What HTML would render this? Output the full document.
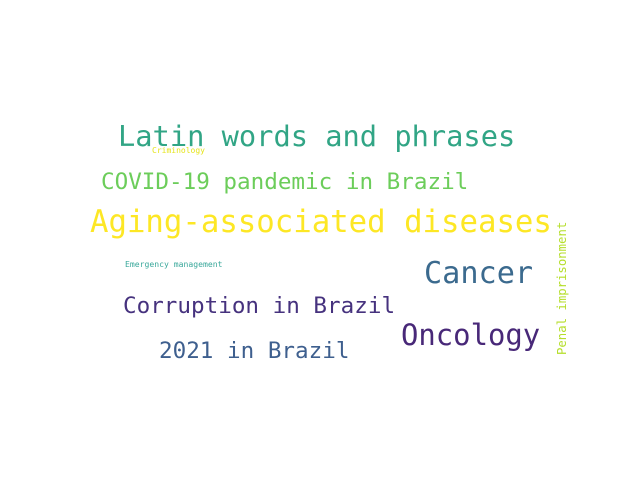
<!DOCTYPE html>
<html><head><style>
body{margin:0;width:640px;height:480px;background:#fff;position:relative;overflow:hidden}
.w{position:absolute;font-family:"DejaVu Sans Mono","Liberation Mono",monospace;line-height:1;white-space:nowrap}
</style></head><body>
<div class="w" style="left:118px;top:122px;font-size:28.7px;color:#31a585">Latin words and phrases</div>
<div class="w" style="left:152px;top:147px;font-size:8px;color:#e5e419">Criminology</div>
<div class="w" style="left:101px;top:171px;font-size:22.6px;color:#6ccd5a">COVID-19 pandemic in Brazil</div>
<div class="w" style="left:90px;top:208px;font-size:30.7px;color:#fde725">Aging-associated diseases</div>
<div class="w" style="left:125px;top:260px;font-size:8.1px;color:#3aa89b">Emergency management</div>
<div class="w" style="left:424px;top:259px;font-size:30.2px;color:#3b6a8e">Cancer</div>
<div class="w" style="left:123px;top:295px;font-size:22.6px;color:#46327e">Corruption in Brazil</div>
<div class="w" style="left:401px;top:321px;font-size:28.9px;color:#482878">Oncology</div>
<div class="w" style="left:159px;top:340px;font-size:22.6px;color:#3e5f8e">2021 in Brazil</div>
<div class="w" style="left:556px;top:355px;font-size:12.3px;color:#b5de2b;transform-origin:0 0;transform:rotate(-90deg)">Penal imprisonment</div>
</body></html>
